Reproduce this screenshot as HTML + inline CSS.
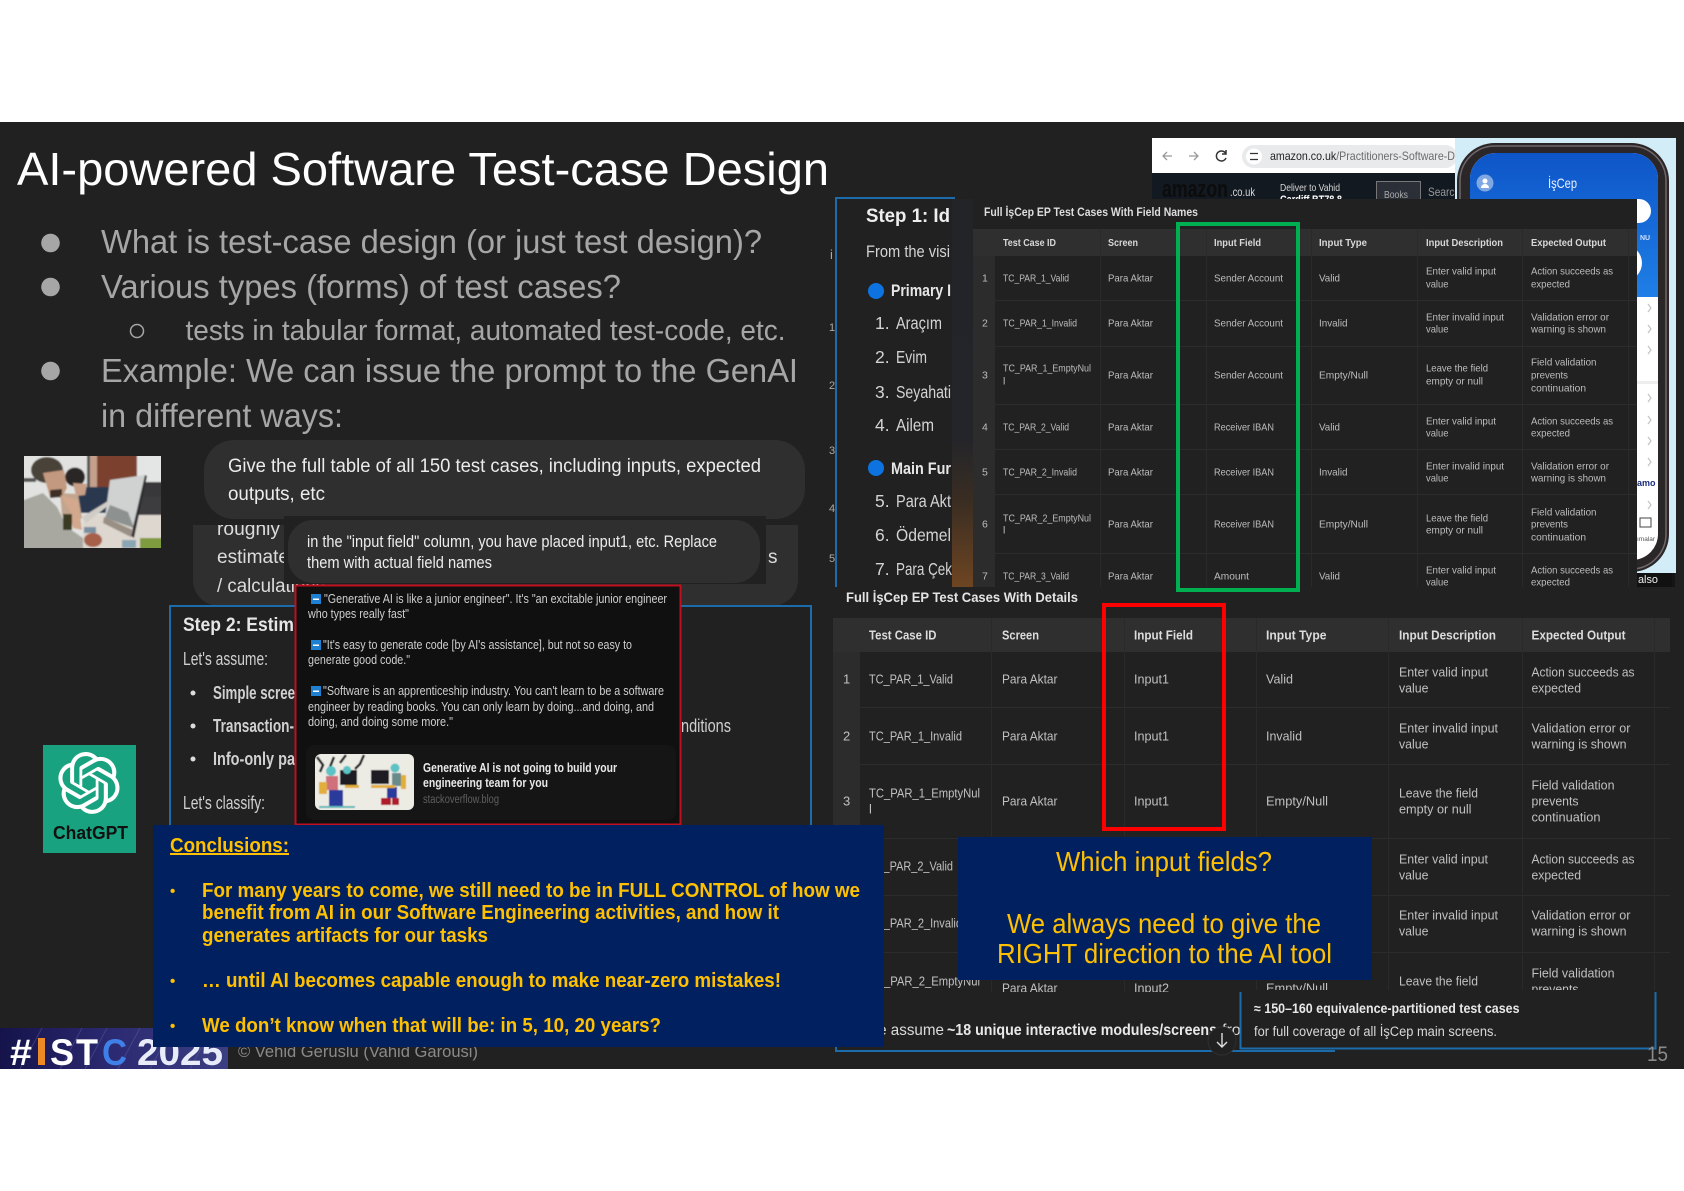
<!DOCTYPE html>
<html lang="en"><head><meta charset="utf-8"><title>AI-powered Software Test-case Design</title>
<style>
html,body{margin:0;padding:0;background:#fff}
svg{display:block}
text{font-family:"Liberation Sans",sans-serif;white-space:pre}
.b{font-weight:bold}
.a{font-size:10.5px;fill:#bdbdbd}
.ah{font-size:10.5px;fill:#d8d8d8;font-weight:bold}
.d{font-size:13px;fill:#c0c0c0}
.dh{font-size:13px;fill:#dcdcdc;font-weight:bold}
.r{font-size:12.5px;fill:#cfcfcf}
.g{fill:#a6a6a6}
.s1{font-size:18px;fill:#d0d0d0}
.y{fill:#ffc000;font-weight:bold;font-size:20px}
.ys{fill:#ffc000;font-weight:bold;font-size:15px}
</style></head><body>
<svg xmlns="http://www.w3.org/2000/svg" width="1684" height="1191" viewBox="0 0 1684 1191">
<defs>
<clipPath id="c2"><rect x="826" y="587" width="850" height="405"/></clipPath>
<clipPath id="c1"><rect x="952" y="199" width="685" height="388"/></clipPath>
<clipPath id="ph"><rect x="1455" y="138" width="221" height="435"/></clipPath>
<clipPath id="foto"><rect x="24" y="456" width="137" height="92"/></clipPath>
<clipPath id="thumb"><rect x="315" y="754" width="99" height="56" rx="6"/></clipPath>
<clipPath id="am"><rect x="1152" y="173" width="303" height="26"/></clipPath>
<clipPath id="bh"><rect x="193" y="525" width="605" height="90"/></clipPath>
<filter id="bl" x="-5%" y="-5%" width="110%" height="110%"><feGaussianBlur stdDeviation=".9"/></filter>
<filter id="bl2" x="-5%" y="-5%" width="110%" height="110%"><feGaussianBlur stdDeviation=".5"/></filter>
<linearGradient id="brn" x1="0" y1="0" x2="0" y2="1"><stop offset="0" stop-color="#222428"/><stop offset=".62" stop-color="#24252a"/><stop offset=".78" stop-color="#3a2d22"/><stop offset="1" stop-color="#6e4522"/></linearGradient>
<linearGradient id="blu" x1="0" y1="0" x2="0" y2="1"><stop offset="0" stop-color="#0e55c8"/><stop offset="1" stop-color="#1f7fe6"/></linearGradient>
<linearGradient id="ban" x1="0" y1="0" x2="1" y2="0"><stop offset="0" stop-color="#15134a"/><stop offset=".5" stop-color="#2c2a72"/><stop offset="1" stop-color="#3b3f82"/></linearGradient>
</defs>
<rect width="1684" height="1191" fill="#fff"/>
<rect y="122" width="1684" height="947" fill="#212121"/>

<!-- Title + bullets -->
<text x="17" y="185" font-size="46" fill="#fff" textLength="812" lengthAdjust="spacingAndGlyphs">AI-powered Software Test-case Design</text>
<circle cx="50.500" cy="243" r="9.300" fill="#a6a6a6"/>
<text class="g" x="101" y="253" font-size="33" textLength="661" lengthAdjust="spacingAndGlyphs">What is test-case design (or just test design)?</text>
<circle cx="50.500" cy="287" r="9.300" fill="#a6a6a6"/>
<text class="g" x="101" y="298" font-size="33" textLength="520" lengthAdjust="spacingAndGlyphs">Various types (forms) of test cases?</text>
<circle cx="137" cy="331" r="6.500" fill="none" stroke="#a6a6a6" stroke-width="1.500"/>
<text class="g" x="185.500" y="340" font-size="28.500" textLength="600" lengthAdjust="spacingAndGlyphs">tests in tabular format, automated test-code, etc.</text>
<circle cx="50.500" cy="371" r="9.300" fill="#a6a6a6"/>
<text class="g" x="101" y="382" font-size="33" textLength="697" lengthAdjust="spacingAndGlyphs">Example: We can issue the prompt to the GenAI</text>
<text class="g" x="101" y="427" font-size="33" textLength="242" lengthAdjust="spacingAndGlyphs">in different ways:</text>

<!-- Photo -->
<g clip-path="url(#foto)"><g filter="url(#bl)">
<rect x="20" y="452" width="145" height="100" fill="#e2e3e1"/>
<rect x="97" y="452" width="40" height="35" fill="#7b3f2e"/>
<rect x="90" y="452" width="7" height="35" fill="#c4a08c"/>
<rect x="87" y="452" width="3" height="35" fill="#555"/>
<rect x="137" y="452" width="28" height="31" fill="#e4e6e6"/>
<rect x="20" y="478" width="16" height="4" fill="#555"/>
<rect x="125" y="482" width="40" height="18" fill="#37393b"/>
<rect x="138" y="497" width="27" height="44" fill="#3d3d40"/>
<rect x="77" y="487" width="34" height="26" fill="#2a394f"/>
<rect x="83" y="515" width="82" height="37" fill="#ddd7cf"/>
<polygon points="110,480 145,475 135,528 105,517" fill="#cfd2d1"/>
<polygon points="110,505 128,512 134,528 105,518" fill="#8d9190"/>
<polygon points="145,475 147,476 134,538 131,536" fill="#2b2b2d"/>
<polygon points="104,517 133,530 131,537 103,523" fill="#9a8f85"/>
<ellipse cx="75" cy="477" rx="10" ry="9.500" fill="#2c2527"/>
<polygon points="73,483 87,484 85,495 76,496" fill="#c89e86"/>
<polygon points="60,493 78,494 82,518 70,526 62,515" fill="#c3a58e"/>
<polygon points="82,517 108,501 109,505 86,523" fill="#d0ccc6"/>
<ellipse cx="47" cy="470" rx="16" ry="13" fill="#4a4238"/>
<polygon points="43,473 64,470 67,488 62,497 50,497" fill="#c39a80"/>
<polygon points="50,490 62,489 62,497 50,498" fill="#3d2e26"/>
<polygon points="24,500 43,493 57,507 67,527 83,538 83,552 20,552 20,500" fill="#a8a8a0"/>
<polygon points="60,495 78,500 82,530 73,528 70,510" fill="#d3a88c"/>
<rect x="63" y="514" width="9" height="16" fill="#3b3a20"/>
<ellipse cx="93" cy="540" rx="9" ry="7" fill="#a6604a"/>
<rect x="84" y="527" width="12" height="6" fill="#7a8fa0"/>
<rect x="140" y="538" width="25" height="14" fill="#7e9b3e"/>
<rect x="122" y="540" width="14" height="8" fill="#8aa6b4"/>
</g></g>

<!-- Behind prompt box -->
<path d="M193 525H798V580a26 26 0 0 1-26 26H219a26 26 0 0 1-26-26Z" fill="#2f2f2f"/>
<g clip-path="url(#bh)">
<text x="217" y="535" font-size="19" fill="#dcdcdc" textLength="63" lengthAdjust="spacingAndGlyphs">roughly</text>
<text x="217" y="563" font-size="19" fill="#dcdcdc" textLength="72" lengthAdjust="spacingAndGlyphs">estimate</text>
<text x="768" y="563" font-size="19" fill="#dcdcdc">s</text>
<text x="217" y="592" font-size="19" fill="#dcdcdc" textLength="108" lengthAdjust="spacingAndGlyphs">/ calculations</text>
</g>

<!-- Bubble 1 -->
<rect x="204" y="440" width="601" height="79" rx="30" fill="#2f2f2f"/>
<text x="228" y="472" font-size="19.500" fill="#ececec" textLength="533" lengthAdjust="spacingAndGlyphs">Give the full table of all 150 test cases, including inputs, expected</text>
<text x="228" y="500" font-size="19.500" fill="#ececec" textLength="97" lengthAdjust="spacingAndGlyphs">outputs, etc</text>

<!-- Bubble 2 -->
<rect x="284" y="516" width="482" height="68" fill="#212121"/>
<rect x="288" y="520" width="472" height="63" rx="25" fill="#2f2f2f"/>
<text x="307" y="547" font-size="16.500" fill="#ececec" textLength="410" lengthAdjust="spacingAndGlyphs">in the "input field" column, you have placed input1, etc. Replace</text>
<text x="307" y="568" font-size="16.500" fill="#ececec" textLength="185" lengthAdjust="spacingAndGlyphs">them with actual field names</text>

<!-- Step 2 -->
<rect x="170" y="606" width="641" height="225" fill="#212121" stroke="#1c6cab" stroke-width="2"/>
<text class="b" x="183" y="631" font-size="19" fill="#e6e6e6" textLength="111" lengthAdjust="spacingAndGlyphs">Step 2: Estim</text>
<text class="s1" x="183" y="665" textLength="85" lengthAdjust="spacingAndGlyphs">Let's assume:</text>
<circle cx="193" cy="693" r="2.500" fill="#ddd"/>
<text class="s1 b" x="213" y="699" textLength="82" lengthAdjust="spacingAndGlyphs">Simple scree</text>
<circle cx="193" cy="726" r="2.500" fill="#ddd"/>
<text class="s1 b" x="213" y="732" textLength="81" lengthAdjust="spacingAndGlyphs">Transaction-</text>
<circle cx="193" cy="759" r="2.500" fill="#ddd"/>
<text class="s1 b" x="213" y="765" textLength="82" lengthAdjust="spacingAndGlyphs">Info-only pa</text>
<text class="s1" x="183" y="809" textLength="82" lengthAdjust="spacingAndGlyphs">Let's classify:</text>
<text class="s1" x="681" y="732" textLength="50" lengthAdjust="spacingAndGlyphs">nditions</text>

<!-- Red quote box -->
<rect x="295.500" y="585.500" width="385" height="239" fill="#101010" stroke="#c00f1e" stroke-width="2"/>
<rect x="311" y="594" width="10" height="10" fill="#1f7fd0"/><rect x="313" y="598.500" width="6" height="1.500" fill="#fff"/>
<text class="r" x="324" y="603" textLength="343" lengthAdjust="spacingAndGlyphs">"Generative AI is like a junior engineer". It's "an excitable junior engineer</text>
<text class="r" x="308" y="618" textLength="101" lengthAdjust="spacingAndGlyphs">who types really fast"</text>
<rect x="311" y="640" width="10" height="10" fill="#1f7fd0"/><rect x="313" y="644.500" width="6" height="1.500" fill="#fff"/>
<text class="r" x="323" y="649" textLength="309" lengthAdjust="spacingAndGlyphs">"It's easy to generate code [by AI's assistance], but not so easy to</text>
<text class="r" x="308" y="664" textLength="102" lengthAdjust="spacingAndGlyphs">generate good code."</text>
<rect x="311" y="686" width="10" height="10" fill="#1f7fd0"/><rect x="313" y="690.500" width="6" height="1.500" fill="#fff"/>
<text class="r" x="323" y="695" textLength="341" lengthAdjust="spacingAndGlyphs">"Software is an apprenticeship industry. You can't learn to be a software</text>
<text class="r" x="308" y="711" textLength="346" lengthAdjust="spacingAndGlyphs">engineer by reading books. You can only learn by doing...and doing, and</text>
<text class="r" x="308" y="726" textLength="145" lengthAdjust="spacingAndGlyphs">doing, and doing some more."</text>
<rect x="306" y="745" width="370" height="75" rx="8" fill="#151515"/>
<g clip-path="url(#thumb)"><g filter="url(#bl2)">
<rect x="312" y="750" width="105" height="64" fill="#ecebe4"/>
<path d="M317 757l6 8-3 7M334 757l-4 10M346 755l-6 8M364 755l-4 9-5 5" stroke="#222" stroke-width="2.500" fill="none"/>
<rect x="340" y="770" width="17" height="15" fill="#1d1d22"/>
<rect x="371" y="770" width="18" height="14" fill="#1d1d22"/>
<circle cx="331" cy="771" r="5" fill="#5cc2c4"/>
<circle cx="347" cy="770" r="4" fill="#5cc2c4"/>
<circle cx="395" cy="768" r="4.500" fill="#5cc2c4"/>
<rect x="326" y="776" width="12" height="14" fill="#d0707a"/>
<rect x="392" y="773" width="9" height="13" fill="#6b8b8c"/>
<rect x="329" y="790" width="14" height="16" fill="#2b3b9c"/>
<rect x="387" y="787" width="10" height="11" fill="#2b3b9c"/>
<rect x="381" y="798" width="10" height="7" fill="#b01f2a"/>
<rect x="392" y="798" width="7" height="7" fill="#b01f2a"/>
<rect x="319" y="782" width="8" height="12" fill="#e2ae3a"/>
<rect x="345" y="785" width="14" height="3" fill="#e2ae3a"/>
<rect x="371" y="785" width="24" height="3" fill="#e2ae3a"/>
<rect x="401" y="775" width="5" height="14" fill="#e2ae3a"/>
<path d="M319 807h36" stroke="#5fb8b8" stroke-width="2"/>
</g></g>
<text x="423" y="772" class="b" font-size="12.500" fill="#e8e8e8" textLength="194" lengthAdjust="spacingAndGlyphs">Generative AI is not going to build your</text>
<text x="423" y="787" class="b" font-size="12.500" fill="#e8e8e8" textLength="125" lengthAdjust="spacingAndGlyphs">engineering team for you</text>
<text x="423" y="803" font-size="11.500" fill="#5f5f5f" textLength="76" lengthAdjust="spacingAndGlyphs">stackoverflow.blog</text>

<!-- ChatGPT logo -->
<rect x="43" y="745" width="93" height="108" fill="#19a27f"/>
<path transform="translate(58,752) scale(2.580)" fill="#fff" d="M22.2819 9.8211a5.9847 5.9847 0 0 0-.5157-4.9108 6.0462 6.0462 0 0 0-6.5098-2.9A6.0651 6.0651 0 0 0 4.9807 4.1818a5.9847 5.9847 0 0 0-3.9977 2.9 6.0462 6.0462 0 0 0 .7427 7.0966 5.98 5.98 0 0 0 .511 4.9107 6.051 6.051 0 0 0 6.5146 2.9001A5.9847 5.9847 0 0 0 13.2599 24a6.0557 6.0557 0 0 0 5.7718-4.2058 5.9894 5.9894 0 0 0 3.9977-2.9001 6.0557 6.0557 0 0 0-.7475-7.0729zm-9.022 12.6081a4.4755 4.4755 0 0 1-2.8764-1.0408l.1419-.0804 4.7783-2.7582a.7948.7948 0 0 0 .3927-.6813v-6.7369l2.02 1.1686a.071.071 0 0 1 .038.052v5.5826a4.504 4.504 0 0 1-4.4945 4.4944zm-9.6607-4.1254a4.4708 4.4708 0 0 1-.5346-3.0137l.142.0852 4.783 2.7582a.7712.7712 0 0 0 .7806 0l5.8428-3.3685v2.3324a.0804.0804 0 0 1-.0332.0615L9.74 19.9502a4.4992 4.4992 0 0 1-6.1408-1.6464zM2.3408 7.8956a4.485 4.485 0 0 1 2.3655-1.9728V11.6a.7664.7664 0 0 0 .3879.6765l5.8144 3.3543-2.0201 1.1685a.0757.0757 0 0 1-.071 0l-4.8303-2.7865A4.504 4.504 0 0 1 2.3408 7.872zm16.5963 3.8558L13.1038 8.364 15.1192 7.2a.0757.0757 0 0 1 .071 0l4.8303 2.7913a4.4944 4.4944 0 0 1-.6765 8.1042v-5.6772a.79.79 0 0 0-.407-.667zm2.0107-3.0231l-.142-.0852-4.7735-2.7818a.7759.7759 0 0 0-.7854 0L9.409 9.2297V6.8974a.0662.0662 0 0 1 .0284-.0615l4.8303-2.7866a4.4992 4.4992 0 0 1 6.6802 4.66zM8.3065 12.863l-2.02-1.1638a.0804.0804 0 0 1-.038-.0567V6.0742a4.4992 4.4992 0 0 1 7.3757-3.4537l-.142.0805L8.704 5.459a.7948.7948 0 0 0-.3927.6813zm1.0976-2.3654l2.602-1.4998 2.6069 1.4998v2.9994l-2.5974 1.4997-2.6067-1.4997Z"/>
<text x="53" y="839" class="b" font-size="18" fill="#101010" textLength="75" lengthAdjust="spacingAndGlyphs">ChatGPT</text>

<!-- Footer banner -->
<rect x="0" y="1028" width="228" height="41" fill="url(#ban)"/>
<path d="M20 1069l22-41M60 1069l22-41M85 1069l22-41M118 1069l22-41M150 1069l22-41M190 1069l22-41" stroke="#5a5aa0" stroke-width="1" opacity=".5"/>
<text class="b" x="10" y="1065" font-size="37" fill="#fff" textLength="22" lengthAdjust="spacingAndGlyphs">#</text>
<rect x="38" y="1038" width="7" height="27" fill="#ee8a26"/>
<text class="b" x="50" y="1065" font-size="37" fill="#fff" textLength="24" lengthAdjust="spacingAndGlyphs">S</text>
<text class="b" x="76" y="1065" font-size="37" fill="#fff" textLength="22" lengthAdjust="spacingAndGlyphs">T</text>
<text class="b" x="102" y="1065" font-size="37" fill="#3f7fe8" textLength="25" lengthAdjust="spacingAndGlyphs">C</text>
<text class="b" x="137" y="1065" font-size="37" fill="#e8ecf8" textLength="86" lengthAdjust="spacingAndGlyphs">2025</text>
<text x="238" y="1057" font-size="17" fill="#8a8a8a" textLength="240" lengthAdjust="spacingAndGlyphs">© Vehid Geruslu (Vahid Garousi)</text>

<!-- Browser -->
<rect x="1152" y="138" width="305" height="35" fill="#fff"/>
<path d="M1172 156h-9m4-4l-4 4 4 4M1189 156h9m-4-4l4 4-4 4" stroke="#9a9a9a" stroke-width="1.300" fill="none"/>
<path d="M1226 154a5 5 0 1 0 0 4M1226 150v4h-4" stroke="#333" stroke-width="1.500" fill="none"/>
<rect x="1242" y="145" width="215" height="23" rx="11.500" fill="#e9eaec"/>
<circle cx="1254" cy="156.500" r="8" fill="#fff"/>
<path d="M1250 153.500h8M1250 159.500h8" stroke="#333" stroke-width="1.300"/>
<text x="1270" y="160" font-size="12" fill="#6b6b6b" textLength="185" lengthAdjust="spacingAndGlyphs"><tspan fill="#222">amazon.co.uk</tspan>/Practitioners-Software-D</text>
<rect x="1152" y="173" width="303" height="26" fill="#131921"/>
<g clip-path="url(#am)">
<text x="1162" y="197" class="b" font-size="24" fill="#0c0c0c" textLength="66" lengthAdjust="spacingAndGlyphs">amazon</text>
<text x="1230" y="196" font-size="12" fill="#d8d8d8" textLength="25" lengthAdjust="spacingAndGlyphs">.co.uk</text>
<text x="1280" y="191" font-size="10.500" fill="#d8d8d8" textLength="60" lengthAdjust="spacingAndGlyphs">Deliver to Vahid</text>
<text x="1280" y="203" class="b" font-size="11" fill="#fff" textLength="62" lengthAdjust="spacingAndGlyphs">Cardiff BT78 8</text>
<rect x="1376.500" y="181.500" width="44" height="20" fill="#2b3038" stroke="#777"/>
<text x="1384" y="198" font-size="10.500" fill="#aaa" textLength="24" lengthAdjust="spacingAndGlyphs">Books</text>
<text x="1428" y="196" font-size="12" fill="#999" textLength="32" lengthAdjust="spacingAndGlyphs">Search</text>
</g>

<!-- Phone -->
<g clip-path="url(#ph)">
<rect x="1455" y="138" width="221" height="435" fill="#d3edf8"/>
<rect x="1457" y="143" width="212" height="429" rx="38" fill="#2b2628"/>
<rect x="1460" y="146" width="206" height="423" rx="35" fill="none" stroke="#6f686a" stroke-width="1.500"/>
<rect x="1470" y="153" width="188" height="407" rx="26" fill="#fff"/>
<path d="M1470 297V179a26 26 0 0 1 26-26h136a26 26 0 0 1 26 26v118z" fill="url(#blu)"/>
<circle cx="1485" cy="183" r="8.500" fill="#7fa8e2"/><circle cx="1485" cy="181" r="2.500" fill="#fff"/><path d="M1481 188a4 4 0 0 1 8 0z" fill="#fff"/>
<text x="1548" y="188" font-size="14" fill="#e8f0ff" textLength="29" lengthAdjust="spacingAndGlyphs">İşCep</text>
<rect x="1600" y="199" width="51" height="24" rx="12" fill="#fff"/>
<text x="1640" y="240" class="b" font-size="7" fill="#cfe0ff">NU</text>
<circle cx="1624" cy="263" r="18" fill="#fff"/>
<path d="M1648 304l3 4-3 4M1648 325l3 4-3 4M1648 346l3 4-3 4M1648 394l3 4-3 4M1648 416l3 4-3 4M1648 437l3 4-3 4M1648 458l3 4-3 4M1648 501l3 4-3 4" stroke="#c4c4c4" fill="none" stroke-width="1.200"/>
<rect x="1637" y="381" width="21" height="3" fill="#eee"/>
<text x="1637" y="486" class="b" font-size="9" fill="#1a2a7a">amo</text>
<rect x="1640" y="518" width="11" height="9" fill="none" stroke="#444"/>
<text x="1637" y="541" font-size="6.500" fill="#555">ımalar</text>
</g>
<rect x="1637" y="573" width="38" height="14" fill="#111"/>
<text x="1637" y="583" font-size="11" fill="#eee" textLength="20" lengthAdjust="spacingAndGlyphs" dx="1">also</text>
<rect x="1672" y="573" width="3" height="24" fill="#151515"/>

<!-- Step 1 panel -->
<rect x="836" y="198" width="119" height="395" fill="#212121"/>
<path d="M836 593V198H955" fill="none" stroke="#1c6cab" stroke-width="2"/>
<text x="830" y="259" font-size="13" fill="#aaa">i</text>
<g font-size="11" fill="#aaa"><text x="829" y="331">1</text><text x="829" y="389">2</text><text x="829" y="454">3</text><text x="829" y="512">4</text><text x="829" y="562">5</text></g>
<text class="b" x="866" y="222" font-size="19" fill="#eee" textLength="84" lengthAdjust="spacingAndGlyphs">Step 1: Id</text>
<text x="866" y="257" font-size="17" fill="#d4d4d4" textLength="84" lengthAdjust="spacingAndGlyphs">From the visi</text>
<circle cx="876" cy="291" r="8" fill="#0d73e0"/>
<text class="b" x="891" y="296" font-size="17" fill="#e6e6e6" textLength="60" lengthAdjust="spacingAndGlyphs">Primary I</text>
<g font-size="17.500" fill="#d4d4d4">
<text x="875" y="329">1.</text><text x="896" y="329" textLength="46" lengthAdjust="spacingAndGlyphs">Araçım</text>
<text x="875" y="363">2.</text><text x="896" y="363" textLength="31" lengthAdjust="spacingAndGlyphs">Evim</text>
<text x="875" y="398">3.</text><text x="896" y="398" textLength="55" lengthAdjust="spacingAndGlyphs">Seyahati</text>
<text x="875" y="431">4.</text><text x="896" y="431" textLength="38" lengthAdjust="spacingAndGlyphs">Ailem</text>
<text x="875" y="507">5.</text><text x="896" y="507" textLength="55" lengthAdjust="spacingAndGlyphs">Para Akt</text>
<text x="875" y="541">6.</text><text x="896" y="541" textLength="55" lengthAdjust="spacingAndGlyphs">Ödemel</text>
<text x="875" y="575">7.</text><text x="896" y="575" textLength="56" lengthAdjust="spacingAndGlyphs">Para Çek</text>
</g>
<circle cx="876" cy="468" r="8" fill="#0d73e0"/>
<text class="b" x="891" y="474" font-size="17" fill="#e6e6e6" textLength="60" lengthAdjust="spacingAndGlyphs">Main Fur</text>

<!-- Table 1 -->
<rect x="952" y="199" width="21" height="388" fill="url(#brn)"/>
<rect x="973" y="199" width="664" height="388" fill="#212121"/>
<rect x="973" y="229" width="664" height="27" fill="#2f2f2f"/>
<rect x="973" y="256" width="22" height="331" fill="#2c2c2c"/>
<path d="M973 300.500H1637M973 346.500H1637M973 404.500H1637M973 449.500H1637M973 494.500H1637M973 553.500H1637" stroke="#2c2c2c"/>
<path d="M1100.500 229V587M1206.500 229V587M1311.500 229V587M1417.500 229V587M1522.500 229V587M1628.500 229V587" stroke="#2a2a2a"/>
<text class="b" x="984" y="216" font-size="11.500" fill="#ddd" textLength="214" lengthAdjust="spacingAndGlyphs">Full İşCep EP Test Cases With Field Names</text>
<g class="hdr">
<text class="ah" x="1003" y="246" textLength="53" lengthAdjust="spacingAndGlyphs">Test Case ID</text>
<text class="ah" x="1108" y="246" textLength="30" lengthAdjust="spacingAndGlyphs">Screen</text>
<text class="ah" x="1214" y="246" textLength="47" lengthAdjust="spacingAndGlyphs">Input Field</text>
<text class="ah" x="1319" y="246" textLength="48" lengthAdjust="spacingAndGlyphs">Input Type</text>
<text class="ah" x="1426" y="246" textLength="77" lengthAdjust="spacingAndGlyphs">Input Description</text>
<text class="ah" x="1531" y="246" textLength="75" lengthAdjust="spacingAndGlyphs">Expected Output</text>
</g>
<g clip-path="url(#c1)"><g transform="translate(0,-.7)">
<!-- r1 -->
<text class="a" x="982" y="282">1</text>
<text class="a" x="1003" y="282" textLength="66" lengthAdjust="spacingAndGlyphs">TC_PAR_1_Valid</text>
<text class="a" x="1108" y="282" textLength="45" lengthAdjust="spacingAndGlyphs">Para Aktar</text>
<text class="a" x="1214" y="282" textLength="69" lengthAdjust="spacingAndGlyphs">Sender Account</text>
<text class="a" x="1319" y="282" textLength="21" lengthAdjust="spacingAndGlyphs">Valid</text>
<text class="a" x="1426" y="275" textLength="70" lengthAdjust="spacingAndGlyphs">Enter valid input</text>
<text class="a" x="1426" y="288" textLength="22.500" lengthAdjust="spacingAndGlyphs">value</text>
<text class="a" x="1531" y="275" textLength="82" lengthAdjust="spacingAndGlyphs">Action succeeds as</text>
<text class="a" x="1531" y="288" textLength="39" lengthAdjust="spacingAndGlyphs">expected</text>
<!-- r2 -->
<text class="a" x="982" y="327">2</text>
<text class="a" x="1003" y="327" textLength="74" lengthAdjust="spacingAndGlyphs">TC_PAR_1_Invalid</text>
<text class="a" x="1108" y="327" textLength="45" lengthAdjust="spacingAndGlyphs">Para Aktar</text>
<text class="a" x="1214" y="327" textLength="69" lengthAdjust="spacingAndGlyphs">Sender Account</text>
<text class="a" x="1319" y="327" textLength="28.500" lengthAdjust="spacingAndGlyphs">Invalid</text>
<text class="a" x="1426" y="321" textLength="78" lengthAdjust="spacingAndGlyphs">Enter invalid input</text>
<text class="a" x="1426" y="333" textLength="22.500" lengthAdjust="spacingAndGlyphs">value</text>
<text class="a" x="1531" y="321" textLength="78" lengthAdjust="spacingAndGlyphs">Validation error or</text>
<text class="a" x="1531" y="333" textLength="75" lengthAdjust="spacingAndGlyphs">warning is shown</text>
<!-- r3 -->
<text class="a" x="982" y="379">3</text>
<text class="a" x="1003" y="372" textLength="88" lengthAdjust="spacingAndGlyphs">TC_PAR_1_EmptyNul</text>
<text class="a" x="1003" y="385">l</text>
<text class="a" x="1108" y="379" textLength="45" lengthAdjust="spacingAndGlyphs">Para Aktar</text>
<text class="a" x="1214" y="379" textLength="69" lengthAdjust="spacingAndGlyphs">Sender Account</text>
<text class="a" x="1319" y="379" textLength="49" lengthAdjust="spacingAndGlyphs">Empty/Null</text>
<text class="a" x="1426" y="372" textLength="62" lengthAdjust="spacingAndGlyphs">Leave the field</text>
<text class="a" x="1426" y="385" textLength="57" lengthAdjust="spacingAndGlyphs">empty or null</text>
<text class="a" x="1531" y="366" textLength="65.500" lengthAdjust="spacingAndGlyphs">Field validation</text>
<text class="a" x="1531" y="379" textLength="37" lengthAdjust="spacingAndGlyphs">prevents</text>
<text class="a" x="1531" y="392" textLength="55" lengthAdjust="spacingAndGlyphs">continuation</text>
<!-- r4 -->
<text class="a" x="982" y="431">4</text>
<text class="a" x="1003" y="431" textLength="66" lengthAdjust="spacingAndGlyphs">TC_PAR_2_Valid</text>
<text class="a" x="1108" y="431" textLength="45" lengthAdjust="spacingAndGlyphs">Para Aktar</text>
<text class="a" x="1214" y="431" textLength="60" lengthAdjust="spacingAndGlyphs">Receiver IBAN</text>
<text class="a" x="1319" y="431" textLength="21" lengthAdjust="spacingAndGlyphs">Valid</text>
<text class="a" x="1426" y="425" textLength="70" lengthAdjust="spacingAndGlyphs">Enter valid input</text>
<text class="a" x="1426" y="437" textLength="22.500" lengthAdjust="spacingAndGlyphs">value</text>
<text class="a" x="1531" y="425" textLength="82" lengthAdjust="spacingAndGlyphs">Action succeeds as</text>
<text class="a" x="1531" y="437" textLength="39" lengthAdjust="spacingAndGlyphs">expected</text>
<!-- r5 -->
<text class="a" x="982" y="476">5</text>
<text class="a" x="1003" y="476" textLength="74" lengthAdjust="spacingAndGlyphs">TC_PAR_2_Invalid</text>
<text class="a" x="1108" y="476" textLength="45" lengthAdjust="spacingAndGlyphs">Para Aktar</text>
<text class="a" x="1214" y="476" textLength="60" lengthAdjust="spacingAndGlyphs">Receiver IBAN</text>
<text class="a" x="1319" y="476" textLength="28.500" lengthAdjust="spacingAndGlyphs">Invalid</text>
<text class="a" x="1426" y="470" textLength="78" lengthAdjust="spacingAndGlyphs">Enter invalid input</text>
<text class="a" x="1426" y="482" textLength="22.500" lengthAdjust="spacingAndGlyphs">value</text>
<text class="a" x="1531" y="470" textLength="78" lengthAdjust="spacingAndGlyphs">Validation error or</text>
<text class="a" x="1531" y="482" textLength="75" lengthAdjust="spacingAndGlyphs">warning is shown</text>
<!-- r6 -->
<text class="a" x="982" y="528">6</text>
<text class="a" x="1003" y="522" textLength="88" lengthAdjust="spacingAndGlyphs">TC_PAR_2_EmptyNul</text>
<text class="a" x="1003" y="534">l</text>
<text class="a" x="1108" y="528" textLength="45" lengthAdjust="spacingAndGlyphs">Para Aktar</text>
<text class="a" x="1214" y="528" textLength="60" lengthAdjust="spacingAndGlyphs">Receiver IBAN</text>
<text class="a" x="1319" y="528" textLength="49" lengthAdjust="spacingAndGlyphs">Empty/Null</text>
<text class="a" x="1426" y="522" textLength="62" lengthAdjust="spacingAndGlyphs">Leave the field</text>
<text class="a" x="1426" y="534" textLength="57" lengthAdjust="spacingAndGlyphs">empty or null</text>
<text class="a" x="1531" y="516" textLength="65.500" lengthAdjust="spacingAndGlyphs">Field validation</text>
<text class="a" x="1531" y="528" textLength="37" lengthAdjust="spacingAndGlyphs">prevents</text>
<text class="a" x="1531" y="541" textLength="55" lengthAdjust="spacingAndGlyphs">continuation</text>
<!-- r7 -->
<text class="a" x="982" y="580">7</text>
<text class="a" x="1003" y="580" textLength="66" lengthAdjust="spacingAndGlyphs">TC_PAR_3_Valid</text>
<text class="a" x="1108" y="580" textLength="45" lengthAdjust="spacingAndGlyphs">Para Aktar</text>
<text class="a" x="1214" y="580" textLength="35" lengthAdjust="spacingAndGlyphs">Amount</text>
<text class="a" x="1319" y="580" textLength="21" lengthAdjust="spacingAndGlyphs">Valid</text>
<text class="a" x="1426" y="574" textLength="70" lengthAdjust="spacingAndGlyphs">Enter valid input</text>
<text class="a" x="1426" y="586" textLength="22.500" lengthAdjust="spacingAndGlyphs">value</text>
<text class="a" x="1531" y="574" textLength="82" lengthAdjust="spacingAndGlyphs">Action succeeds as</text>
<text class="a" x="1531" y="586" textLength="39" lengthAdjust="spacingAndGlyphs">expected</text>
</g></g>

<!-- Table 2 -->
<rect x="826" y="587" width="850" height="464" fill="#212121"/>
<text class="b" x="846" y="602" font-size="14" fill="#e4e4e4" textLength="232" lengthAdjust="spacingAndGlyphs">Full İşCep EP Test Cases With Details</text>
<rect x="833" y="618" width="837" height="34" fill="#2f2f2f"/>
<rect x="833" y="652" width="27" height="340" fill="#2c2c2c"/>
<path d="M833 707.500H1670M833 764.500H1670M833 838.500H1670M833 895.500H1670M833 952.500H1670" stroke="#2c2c2c"/>
<path d="M991.500 618V992M1124.500 618V992M1256.500 618V992M1388.500 618V992M1522.500 618V992M1654.500 618V992" stroke="#2a2a2a"/>
<text class="dh" x="869" y="639.500" textLength="67.500" lengthAdjust="spacingAndGlyphs">Test Case ID</text>
<text class="dh" x="1002" y="639.500" textLength="37" lengthAdjust="spacingAndGlyphs">Screen</text>
<text class="dh" x="1134" y="639.500" textLength="59" lengthAdjust="spacingAndGlyphs">Input Field</text>
<text class="dh" x="1266" y="639.500" textLength="60.500" lengthAdjust="spacingAndGlyphs">Input Type</text>
<text class="dh" x="1399" y="639.500" textLength="97" lengthAdjust="spacingAndGlyphs">Input Description</text>
<text class="dh" x="1531.500" y="639.500" textLength="94" lengthAdjust="spacingAndGlyphs">Expected Output</text>
<g clip-path="url(#c2)"><g transform="translate(0,-.7)">
<!-- r1 -->
<text class="d" x="843" y="684">1</text>
<text class="d" x="869" y="684" textLength="84" lengthAdjust="spacingAndGlyphs">TC_PAR_1_Valid</text>
<text class="d" x="1002" y="684" textLength="55.500" lengthAdjust="spacingAndGlyphs">Para Aktar</text>
<text class="d" x="1134" y="684" textLength="35" lengthAdjust="spacingAndGlyphs">Input1</text>
<text class="d" x="1266" y="684" textLength="27" lengthAdjust="spacingAndGlyphs">Valid</text>
<text class="d" x="1399" y="677" textLength="89" lengthAdjust="spacingAndGlyphs">Enter valid input</text>
<text class="d" x="1399" y="693" textLength="29.500" lengthAdjust="spacingAndGlyphs">value</text>
<text class="d" x="1531.500" y="677" textLength="103" lengthAdjust="spacingAndGlyphs">Action succeeds as</text>
<text class="d" x="1531.500" y="693" textLength="49.500" lengthAdjust="spacingAndGlyphs">expected</text>
<!-- r2 -->
<text class="d" x="843" y="741">2</text>
<text class="d" x="869" y="741" textLength="93" lengthAdjust="spacingAndGlyphs">TC_PAR_1_Invalid</text>
<text class="d" x="1002" y="741" textLength="55.500" lengthAdjust="spacingAndGlyphs">Para Aktar</text>
<text class="d" x="1134" y="741" textLength="35" lengthAdjust="spacingAndGlyphs">Input1</text>
<text class="d" x="1266" y="741" textLength="36" lengthAdjust="spacingAndGlyphs">Invalid</text>
<text class="d" x="1399" y="733" textLength="99" lengthAdjust="spacingAndGlyphs">Enter invalid input</text>
<text class="d" x="1399" y="749" textLength="29.500" lengthAdjust="spacingAndGlyphs">value</text>
<text class="d" x="1531.500" y="733" textLength="99" lengthAdjust="spacingAndGlyphs">Validation error or</text>
<text class="d" x="1531.500" y="749" textLength="95" lengthAdjust="spacingAndGlyphs">warning is shown</text>
<!-- r3 -->
<text class="d" x="843" y="806">3</text>
<text class="d" x="869" y="798" textLength="111" lengthAdjust="spacingAndGlyphs">TC_PAR_1_EmptyNul</text>
<text class="d" x="869" y="814">l</text>
<text class="d" x="1002" y="806" textLength="55.500" lengthAdjust="spacingAndGlyphs">Para Aktar</text>
<text class="d" x="1134" y="806" textLength="35" lengthAdjust="spacingAndGlyphs">Input1</text>
<text class="d" x="1266" y="806" textLength="62" lengthAdjust="spacingAndGlyphs">Empty/Null</text>
<text class="d" x="1399" y="798" textLength="79" lengthAdjust="spacingAndGlyphs">Leave the field</text>
<text class="d" x="1399" y="814" textLength="72.500" lengthAdjust="spacingAndGlyphs">empty or null</text>
<text class="d" x="1531.500" y="790" textLength="83" lengthAdjust="spacingAndGlyphs">Field validation</text>
<text class="d" x="1531.500" y="806" textLength="47" lengthAdjust="spacingAndGlyphs">prevents</text>
<text class="d" x="1531.500" y="822" textLength="69" lengthAdjust="spacingAndGlyphs">continuation</text>
<!-- r4 -->
<text class="d" x="869" y="871" textLength="84" lengthAdjust="spacingAndGlyphs">TC_PAR_2_Valid</text>
<text class="d" x="1399" y="864" textLength="89" lengthAdjust="spacingAndGlyphs">Enter valid input</text>
<text class="d" x="1399" y="880" textLength="29.500" lengthAdjust="spacingAndGlyphs">value</text>
<text class="d" x="1531.500" y="864" textLength="103" lengthAdjust="spacingAndGlyphs">Action succeeds as</text>
<text class="d" x="1531.500" y="880" textLength="49.500" lengthAdjust="spacingAndGlyphs">expected</text>
<!-- r5 -->
<text class="d" x="869" y="928" textLength="93" lengthAdjust="spacingAndGlyphs">TC_PAR_2_Invalid</text>
<text class="d" x="1399" y="920" textLength="99" lengthAdjust="spacingAndGlyphs">Enter invalid input</text>
<text class="d" x="1399" y="936" textLength="29.500" lengthAdjust="spacingAndGlyphs">value</text>
<text class="d" x="1531.500" y="920" textLength="99" lengthAdjust="spacingAndGlyphs">Validation error or</text>
<text class="d" x="1531.500" y="936" textLength="95" lengthAdjust="spacingAndGlyphs">warning is shown</text>
<!-- r6 -->
<text class="d" x="869" y="986" textLength="111" lengthAdjust="spacingAndGlyphs">TC_PAR_2_EmptyNul</text>
<text class="d" x="1002" y="993" textLength="55.500" lengthAdjust="spacingAndGlyphs">Para Aktar</text>
<text class="d" x="1134" y="993" textLength="35" lengthAdjust="spacingAndGlyphs">Input2</text>
<text class="d" x="1266" y="993" textLength="62" lengthAdjust="spacingAndGlyphs">Empty/Null</text>
<text class="d" x="1399" y="986" textLength="79" lengthAdjust="spacingAndGlyphs">Leave the field</text>
<text class="d" x="1531.500" y="978" textLength="83" lengthAdjust="spacingAndGlyphs">Field validation</text>
<text class="d" x="1531.500" y="994" textLength="47" lengthAdjust="spacingAndGlyphs">prevents</text>
</g></g>

<!-- Bottom summary -->
<rect x="826" y="992" width="414" height="59" fill="#212121"/>
<text x="864" y="1035" font-size="16" fill="#dcdcdc" textLength="80" lengthAdjust="spacingAndGlyphs">We assume</text>
<text class="b" x="947" y="1035" font-size="16" fill="#e8e8e8" textLength="270" lengthAdjust="spacingAndGlyphs">~18 unique interactive modules/screens</text>
<text x="1222" y="1035" font-size="16" fill="#dcdcdc">from</text>
<path d="M836 1044V1051H1335" fill="none" stroke="#1c6cab" stroke-width="2"/>
<circle cx="1222" cy="1041" r="14" fill="#212121" stroke="#2f2f2f"/>
<path d="M1222 1033v14m-5-5l5 5 5-5" stroke="#ddd" stroke-width="1.400" fill="none"/>

<!-- Right summary -->
<rect x="1240" y="990" width="416" height="58" fill="#212121"/>
<path d="M1240.500 992V1048.500H1655.500V992" fill="none" stroke="#1c6cab" stroke-width="2"/>
<text class="b" x="1254" y="1013" font-size="13.500" fill="#e8e8e8" textLength="265.500" lengthAdjust="spacingAndGlyphs">≈ 150–160 equivalence-partitioned test cases</text>
<text x="1254" y="1036" font-size="13.500" fill="#d8d8d8" textLength="243" lengthAdjust="spacingAndGlyphs">for full coverage of all İşCep main screens.</text>
<text x="1647" y="1061" font-size="21" fill="#8a8a8a" textLength="21" lengthAdjust="spacingAndGlyphs">15</text>

<!-- Highlight rectangles -->
<rect x="1178" y="224" width="120" height="366" fill="none" stroke="#00b050" stroke-width="4"/>
<rect x="1104" y="605" width="120" height="224" fill="none" stroke="#ff0000" stroke-width="4"/>

<!-- Conclusions -->
<rect x="153" y="825" width="731" height="222" fill="#002060"/>
<text class="y" x="170" y="852" text-decoration="underline" font-size="21" textLength="119" lengthAdjust="spacingAndGlyphs">Conclusions:</text>
<text class="ys" x="170" y="896">•</text>
<text class="y" x="202" y="897" textLength="658" lengthAdjust="spacingAndGlyphs">For many years to come, we still need to be in FULL CONTROL of how we</text>
<text class="y" x="202" y="919" textLength="577" lengthAdjust="spacingAndGlyphs">benefit from AI in our Software Engineering activities, and how it</text>
<text class="y" x="202" y="942" textLength="286" lengthAdjust="spacingAndGlyphs">generates artifacts for our tasks</text>
<text class="ys" x="170" y="986">•</text>
<text class="y" x="202" y="987" textLength="579" lengthAdjust="spacingAndGlyphs">… until AI becomes capable enough to make near-zero mistakes!</text>
<text class="ys" x="170" y="1031">•</text>
<text class="y" x="202" y="1032" textLength="459" lengthAdjust="spacingAndGlyphs">We don’t know when that will be: in 5, 10, 20 years?</text>

<!-- Which input -->
<rect x="958" y="837" width="414" height="143" fill="#002060"/>
<text x="1056" y="871" font-size="28" fill="#ffc000" textLength="216" lengthAdjust="spacingAndGlyphs">Which input fields?</text>
<text x="1007" y="933" font-size="28" fill="#ffc000" textLength="314" lengthAdjust="spacingAndGlyphs">We always need to give the</text>
<text x="997" y="963" font-size="28" fill="#ffc000" textLength="335" lengthAdjust="spacingAndGlyphs">RIGHT direction to the AI tool</text>
</svg>
</body></html>
